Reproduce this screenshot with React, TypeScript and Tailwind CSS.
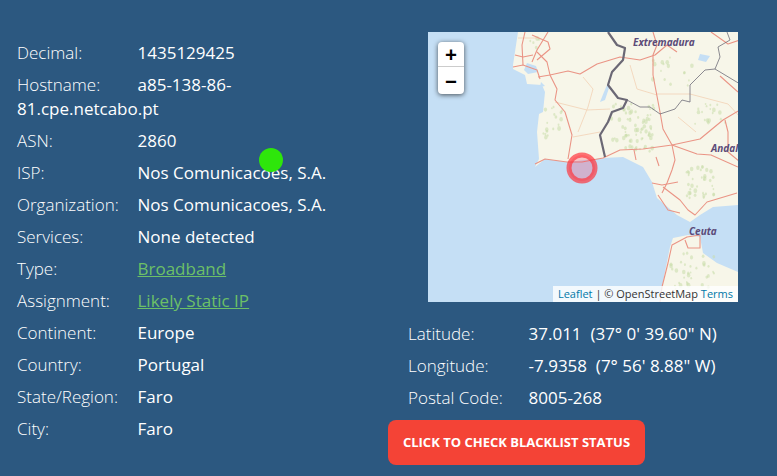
import React from "react";

const F = "font-['Open_Sans',sans-serif]";

function Row({ label, children }: { label: string; children: React.ReactNode }) {
  return (
    <div className="py-1 text-[17px] leading-6 text-white">
      <span className="inline-block w-[120.5px] font-light">{label}</span>
      <span className="font-medium">{children}</span>
    </div>
  );
}

const roads = [
  "M97 0 L94 13 L95 33",
  "M120 0 L109 18 L104 30",
  "M104 3 L120 10 L122 17 L109 28",
  "M109 20 L119 30 L122 43",
  "M110 45 L122 43 L140 39 L152 42 L169 32 L192 25 L212 28 L227 23 L239 13 L249 20",
  "M122 43 L129 57 L127 68 L137 80 L144 103 L140 127",
  "M87 23 L95 25 L105 23 M85 35 L95 33 L109 38 L112 47",
  "M225 0 L229 13 L225 23 L225 43 L232 80 L235 97 L244 113 L247 128 L244 138 L239 151 L234 161",
  "M107 132 L117 127 L139 130 L154 130 L175 126 L192 118 L215 117 L244 113 L272 107 L295 88 L312 78",
  "M244 113 L269 122 L283 123 L310 135 M297 88 L300 100 L300 120 L312 130",
  "M224 151 L234 153 L250 150 M235 155 L252 168 L260 178 L267 183 L279 170 L309 161",
  "M230 163 L240 178 L252 181 M228 125 L231 134 M206 118 L208 128",
  "M232 270 L234 255 L240 231 L244 213 L259 205 L272 203 M257 208 L260 216 L272 216 L272 203",
  "M283 0 L300 12 L312 8 M292 44 L310 60",
];
const paleRoads = [
  "M127 70 L159 78 L182 77 M155 45 L165 57 L160 75 L150 100",
  "M202 33 L209 57 L229 63 M229 62 L262 62 L300 72 L312 85",
  "M250 85 L268 100 M145 105 L172 100 M90 6 L110 6",
];

function dabs() {
  const clusters: [number, number, number, number, number][] = [
    [205, 92, 22, 20, 60],
    [125, 90, 10, 16, 18],
    [272, 150, 14, 16, 36],
    [265, 240, 22, 20, 36],
    [282, 82, 16, 12, 18],
    [245, 40, 22, 16, 16],
    [215, 118, 18, 4, 10],
    [107, 10, 5, 6, 5],
  ];
  let s = 7;
  const r = () => {
    s = (s * 16807) % 2147483647;
    return (s % 2000) / 1000 - 1;
  };
  const out: { x: number; y: number; a: number }[] = [];
  clusters.forEach(([x, y, w, h, n]) => {
    for (let i = 0; i < n; i++) out.push({ x: x + r() * w, y: y + r() * h, a: 0.8 + Math.abs(r()) * 1.1 });
  });
  return out;
}

function MapArt() {
  return (
    <svg viewBox="0 0 310 270" className="block h-[270px] w-[310px]">
      <rect width="310" height="270" fill="#c5dff5" />
      <path d="M90 0 L85 33 L85 37 L97 43 L99 52 L114 53 L117 60 L115 80 L111 82 L109 100 L111 127 L107 135 L117 127 L139 130 L175 126 L195 125 L215 135 L224 150 L229 166 L249 183 L262 190 L272 183 L285 175 L310 173 L310 0 Z" fill="#f7f6e9" />
      <path d="M232 270 L234 255 L242 215 L245 206 L260 203 L272 205 L275 221 L289 231 L310 240 L310 270 Z" fill="#f7f6e9" />
      <path d="M99 31 L108 34 L110 40 L100 42 L96 38 Z M179 53 L181 56 L177 68 L172 70 L176 60 Z M113 50 L117 54 L112 55 Z M272 22 L282 24 L278 30 L270 28 Z" fill="#c5dff5" />
      {dabs().map((d, i) => (
        <ellipse key={i} cx={d.x} cy={d.y} rx={d.a} ry={d.a * 1.3} fill="#c9dcaa" opacity="0.55" />
      ))}
      {paleRoads.map((d) => (
        <path key={d} d={d} fill="none" stroke="#f2d2b5" strokeWidth="0.8" />
      ))}
      {roads.map((d) => (
        <path key={d} d={d} fill="none" stroke="#ea9485" strokeWidth="1.1" strokeLinejoin="round" />
      ))}
      <path d="M180 0 L189 13 L197 16 L195 28 L184 40 L180 53 L190 66 L199 68 L195 76 L184 80 L180 90 L172 103 L177 125" fill="none" stroke="#6b6875" strokeWidth="2.2" strokeLinejoin="round" />
      <path d="M199 68 L212 75 L222 75 L232 82 L247 77 L254 68 L262 70 L262 53 L277 38 L287 37 L312 52 M287 37 L292 25 L290 15 L302 8 L299 0" fill="none" stroke="#6f6d78" strokeWidth="0.8" />
      <circle cx="154" cy="136" r="13" fill="#ff0033" fillOpacity="0.2" stroke="#ff3038" strokeOpacity="0.68" strokeWidth="5" />
      <g fontFamily="'Open Sans',sans-serif" fontStyle="italic" fontWeight="700" fontSize="10" fill="#5b4a78">
        <text x="205" y="14">Extremadura</text>
        <text x="283" y="120">Andal</text>
        <text x="261" y="203">Ceuta</text>
      </g>
    </svg>
  );
}

export default function App() {
  return (
    <div className={`${F} relative flex h-[476px] w-[777px] overflow-hidden bg-[#2c5880] pl-[17px]`}>
      <div className="w-[330px] pt-[37px]">
        <Row label="Decimal:">1435129425</Row>
        <Row label="Hostname:">a85-138-86-81.cpe.netcabo.pt</Row>
        <Row label="ASN:">2860</Row>
        <Row label="ISP:">Nos Comunicacoes, S.A.</Row>
        <Row label="Organization:">Nos Comunicacoes, S.A.</Row>
        <Row label="Services:">None detected</Row>
        <Row label="Type:">
          <a className="font-normal text-[#6cc067] underline">Broadband</a>
        </Row>
        <Row label="Assignment:">
          <a className="font-normal text-[#6cc067] underline">Likely Static IP</a>
        </Row>
        <Row label="Continent:">Europe</Row>
        <Row label="Country:">Portugal</Row>
        <Row label="State/Region:">Faro</Row>
        <Row label="City:">Faro</Row>
      </div>
      <div className="ml-[41px] flex flex-col items-start pt-[32px]">
        <div className="relative ml-[40px] h-[270px] w-[310px]">
          <MapArt />
          <div className="absolute left-[10px] top-[10px] w-[26px] overflow-hidden rounded bg-white text-black shadow-[0_1px_5px_rgba(0,0,0,0.65)]">
            <div className="flex h-[25px] items-center justify-center border-b border-[#ccc] text-[21px] font-bold leading-none">+</div>
            <div className="flex h-[27px] items-center justify-center pt-[1px] text-[21px] font-bold leading-none">−</div>
          </div>
          <div className="absolute bottom-0 right-0 bg-white/80 px-[5px] text-[11px] leading-4 text-[#333]">
            <span className="text-[#0078a8]">Leaflet</span> | © OpenStreetMap <span className="text-[#0078a8]">Terms</span>
          </div>
        </div>
        <div className="ml-[20px] mt-[16px]">
          <Row label="Latitude:">37.011&nbsp; (37° 0' 39.60" N)</Row>
          <Row label="Longitude:">-7.9358&nbsp; (7° 56' 8.88" W)</Row>
          <Row label="Postal Code:">8005-268</Row>
        </div>
        <button className="mt-[6px] flex h-[45px] w-[257px] items-center justify-center rounded-lg bg-[#f44336] text-[13px] font-bold text-white">
          CLICK TO CHECK BLACKLIST STATUS
        </button>
      </div>
      <div className="absolute left-[259px] top-[148px] h-6 w-6 rounded-full bg-[#2ee60b]" />
    </div>
  );
}
